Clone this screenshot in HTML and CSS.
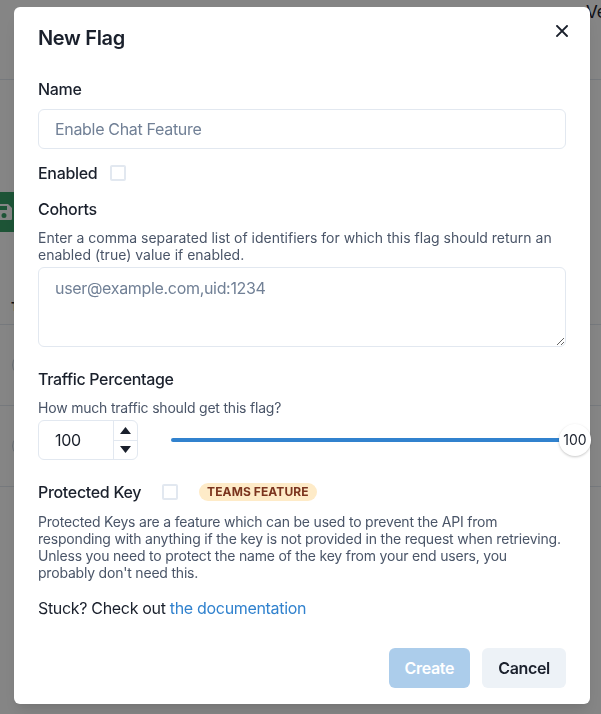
FILE: index.html
```html
<!DOCTYPE html>
<html lang="en">
<head>
<meta charset="utf-8">
<title>New Flag</title>
<link rel="stylesheet" href="styles.css">
</head>
<body>
<div class="page">
  <header class="bg-header"><span class="bg-title">Version</span></header>
  <div class="bg-toolbar">
    <button class="bg-save" type="button">
      <svg width="20" height="20" viewBox="0 0 20 20" aria-hidden="true"><path d="M3 2h11l4 4v11a1 1 0 0 1-1 1H3a1 1 0 0 1-1-1V3a1 1 0 0 1 1-1zm2 2v4h8V4H5zm5 7a2.5 2.5 0 1 0 0 5 2.5 2.5 0 0 0 0-5z" fill="#fff"/></svg>
    </button>
  </div>
  <div class="bg-table">
    <div class="bg-thead"><span>Th</span></div>
    <div class="bg-row"><span class="bg-dot"></span></div>
    <div class="bg-row"><span class="bg-dot"></span></div>
  </div>
</div>

<div class="overlay">
  <section class="modal" role="dialog" aria-label="New Flag">
    <header class="modal-header">New Flag</header>
    <button class="close" type="button" aria-label="Close">
      <svg width="12" height="12" viewBox="0 0 12 12" aria-hidden="true"><path d="M1 1L11 11M11 1L1 11" stroke="#1A202C" stroke-width="1.9" stroke-linecap="square"/></svg>
    </button>
    <div class="modal-body">
      <label class="label">Name</label>
      <input class="input" type="text" placeholder="Enable Chat Feature">

      <div class="check-row enabled-row">
        <span class="label-inline">Enabled</span>
        <span class="checkbox"></span>
      </div>

      <label class="label cohorts-label">Cohorts</label>
      <p class="help help-cohorts">Enter a comma separated list of identifiers for which this flag should return an enabled (true) value if enabled.</p>
      <textarea class="textarea" placeholder="user@example.com,uid:1234"></textarea>

      <label class="label traffic-label">Traffic Percentage</label>
      <p class="help help-traffic">How much traffic should get this flag?</p>
      <div class="traffic-row">
        <div class="number">
          <input class="number-field" type="text" value="100">
          <div class="stepper">
            <span class="step step-up"><svg width="11" height="7" viewBox="0 0 11 7" aria-hidden="true"><path d="M5.5 0L11 7H0z" fill="#1A202C"/></svg></span>
            <span class="step step-down"><svg width="11" height="7" viewBox="0 0 11 7" aria-hidden="true"><path d="M0 0H11L5.5 7z" fill="#1A202C"/></svg></span>
          </div>
        </div>
        <div class="slider">
          <div class="track"></div>
          <div class="thumb">100</div>
        </div>
      </div>

      <div class="check-row protected-row">
        <span class="label-inline">Protected Key</span>
        <span class="checkbox"></span>
        <span class="badge">Teams Feature</span>
      </div>
      <p class="help help-protected">Protected Keys are a feature which can be used to prevent the API from<br>responding with anything if the key is not provided in the request when retrieving.<br>Unless you need to protect the name of the key from your end users, you<br>probably don't need this.</p>

      <p class="stuck">Stuck? Check out <a class="link" href="#">the documentation</a></p>
    </div>
    <footer class="modal-footer">
      <button class="btn btn-create" type="button" disabled>Create</button>
      <button class="btn btn-cancel" type="button">Cancel</button>
    </footer>
  </section>
</div>
</body>
</html>
```

FILE: styles.css
```css
* { box-sizing: border-box; }
html, body { margin: 0; padding: 0; }
body {
  font-family: Inter, "Noto Sans", "Liberation Sans", sans-serif;
  color: #1A202C;
  background: #fff;
  overflow: hidden;
  width: 601px;
  height: 714px;
  letter-spacing: -0.02em;
}

/* background page */
.page { width: 601px; }
.bg-header {
  height: 80px;
  border-bottom: 1px solid #E2E8F0;
  padding-left: 586px;
  white-space: nowrap;
  overflow: hidden;
}
.bg-title { font-size: 17px; line-height: 22px; display: block; padding-top: 1px; letter-spacing: 0; }
.bg-toolbar { margin-top: 112px; height: 40px; }
.bg-save {
  margin-left: -24px;
  width: 60px;
  height: 40px;
  border: 0;
  border-radius: 6px;
  background: #38A169;
  display: flex;
  align-items: center;
  padding-left: 18px;
}
.bg-table { margin-top: 48px; }
.bg-thead {
  height: 45px;
  border-bottom: 1px solid #E2E8F0;
  padding-left: 11px;
  font-size: 12px;
  font-weight: 700;
  line-height: 14px;
  padding-top: 20px;
}
.bg-row {
  height: 81px;
  border-bottom: 1px solid #E2E8F0;
  display: flex;
  align-items: center;
  padding-left: 12px;
}
.bg-dot {
  width: 22px; height: 22px; border-radius: 50%;
  border: 1px solid #CBD5E0;
  background: #F7FAFC;
}

/* overlay + modal */
.overlay {
  position: fixed;
  inset: 0;
  background: rgba(0, 0, 0, 0.48);
  padding: 7px 0 0 14px;
}
.modal {
  position: relative;
  width: 576px;
  background: #fff;
  border-radius: 6px;
  box-shadow: 0 10px 15px -3px rgba(0,0,0,.1), 0 4px 6px -2px rgba(0,0,0,.05);
}
.modal-header {
  padding: 16px 24px;
  font-size: 20px;
  line-height: 30px;
  font-weight: 600;
}
.close {
  position: absolute;
  top: 8px;
  right: 12px;
  width: 32px;
  height: 32px;
  border: 0;
  background: transparent;
  border-radius: 6px;
  display: flex;
  align-items: center;
  justify-content: center;
  padding: 0;
}
.modal-body { padding: 8px 24px; }

.label {
  display: block;
  font-size: 16px;
  line-height: 24px;
  font-weight: 500;
  margin-bottom: 8px;
}
.input, .textarea, .number-field {
  font-family: inherit;
  font-size: 16px;
  letter-spacing: -0.02em;
  color: #1A202C;
  border: 1px solid #E2E8F0;
  border-radius: 6px;
  background: #fff;
  outline: none;
}
.input::placeholder, .textarea::placeholder { color: #718096; opacity: 1; }
.input {
  display: block;
  width: 100%;
  height: 40px;
  padding: 0 16px;
}
.check-row {
  display: flex;
  align-items: center;
  height: 24px;
}
.label-inline { font-size: 16px; line-height: 24px; font-weight: 500; }
.checkbox {
  width: 16px;
  height: 16px;
  border: 2px solid #E2E8F0;
  border-radius: 2px;
  background: #fff;
}
.enabled-row { margin-top: 12px; gap: 13px; }
.cohorts-label { margin-top: 12px; }
.help {
  margin: 0;
  font-size: 14px;
  line-height: 17px;
  color: #4A5568;
  letter-spacing: 0;
}
.help-cohorts { margin-bottom: 4px; }
.textarea {
  display: block;
  width: 100%;
  height: 80px;
  padding: 8px 16px;
  line-height: 24px;
  resize: vertical;
}
.traffic-label { margin-top: 20px; }
.help-traffic { margin-bottom: 4px; letter-spacing: -0.2px; }
.traffic-row {
  display: flex;
  align-items: center;
  height: 40px;
}
.number {
  position: relative;
  width: 100px;
  height: 40px;
  flex: none;
}
.number-field {
  width: 100%;
  height: 40px;
  padding: 0 32px 0 16px;
}
.stepper {
  position: absolute;
  top: 1px;
  right: 1px;
  bottom: 1px;
  width: 24px;
  border-left: 1px solid #E2E8F0;
  display: flex;
  flex-direction: column;
}
.step {
  flex: 1;
  display: flex;
  align-items: center;
  justify-content: center;
}
.step-down { border-top: 1px solid #E2E8F0; }
.slider {
  position: relative;
  flex: 1;
  margin-left: 33px;
  height: 40px;
  display: flex;
  align-items: center;
}
.track {
  width: 100%;
  height: 4px;
  border-radius: 2px;
  background: #3182CE;
}
.thumb {
  position: absolute;
  left: calc(100% - 7px);
  top: 4px;
  width: 32px;
  height: 32px;
  border-radius: 50%;
  background: #fff;
  box-shadow: 0 1px 3px rgba(0,0,0,.15), 0 1px 2px rgba(0,0,0,.08);
  font-size: 14px;
  line-height: 32px;
  text-align: center;
  letter-spacing: 0;
}
.protected-row { margin-top: 20px; gap: 21px; }
.badge {
  display: inline-block;
  height: 18px;
  padding: 0 8px;
  border-radius: 9999px;
  background: #FEEBC8;
  color: #7B341E;
  font-size: 12px;
  line-height: 18px;
  font-weight: 700;
  text-transform: uppercase;
  letter-spacing: 0.1px;
}
.help-protected { margin-top: 9px; letter-spacing: -0.2px; white-space: nowrap; }
.stuck {
  margin: 15px 0 0;
  font-size: 16px;
  line-height: 24px;
}
.link { color: #3182CE; text-decoration: none; }

.modal-footer {
  display: flex;
  justify-content: flex-end;
  gap: 12px;
  padding: 20px 24px 16px;
}
.btn {
  height: 40px;
  padding: 0 16px;
  border: 0;
  border-radius: 6px;
  font-family: inherit;
  font-size: 16px;
  font-weight: 600;
  letter-spacing: -0.02em;
}
.btn-create { background: #3182CE; color: #fff; opacity: 0.4; }
.btn-cancel { background: #EDF2F7; color: #1A202C; }
```
